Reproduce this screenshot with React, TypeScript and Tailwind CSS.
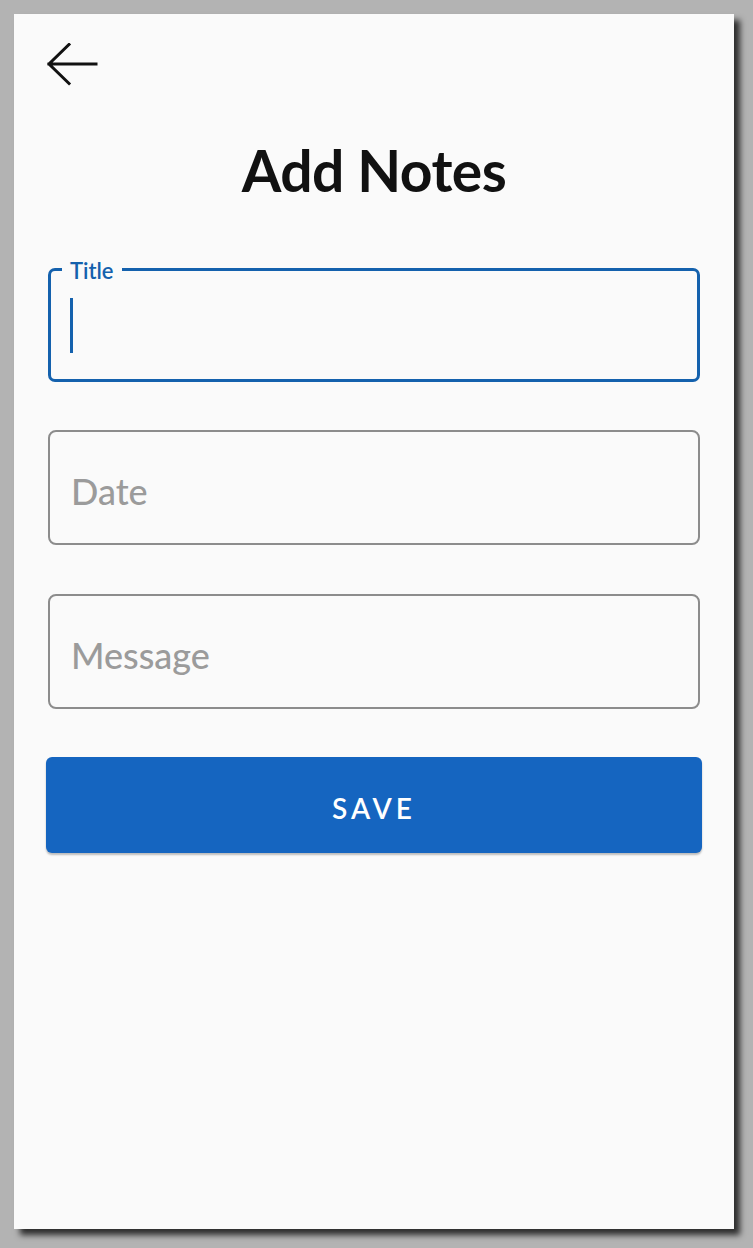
import React from "react";

function BackArrow() {
  return (
    <svg width="52" height="44" viewBox="0 0 52 44" fill="none">
      <path
        d="M50 21H3M23 1.5L3 21L23 40.5"
        stroke="#111"
        strokeWidth="3"
        strokeLinecap="square"
      />
    </svg>
  );
}

function TextBox({ placeholder }: { placeholder: string }) {
  return (
    <div className="flex h-[115px] items-center rounded-[8px] border-2 border-[#8c8c8c] px-[21px] pt-[6px]">
      <span className="text-[36px] leading-none font-medium text-[#9b9b9b]">
        {placeholder}
      </span>
    </div>
  );
}

export default function App() {
  return (
    <div className="h-[1248px] w-[753px] bg-[#b3b3b3] p-[14px] font-['Lato',sans-serif]">
      <div className="flex h-[1215px] w-[720px] flex-col bg-[#fafafa] px-[34px] shadow-[6px_6px_6px_rgba(0,0,0,0.75)]">
        <div className="mt-[29px] ml-[-2px]">
          <BackArrow />
        </div>

        <h1 className="mt-[55px] text-center text-[57px] leading-none font-bold tracking-[-0.5px] text-[#111]">
          Add Notes
        </h1>

        {/* focused field */}
        <div className="relative mt-[69px] flex h-[114px] items-center rounded-[7px] border-[3px] border-[#1461ad] px-[19px]">
          <span className="absolute -top-[11px] left-[11px] bg-[#fafafa] px-[8px] text-[22px] leading-none font-semibold text-[#1461ad]">
            Title
          </span>
          <div className="h-[55px] w-[3px] bg-[#1461ad]" />
        </div>

        <div className="mt-[48px]">
          <TextBox placeholder="Date" />
        </div>
        <div className="mt-[49px]">
          <TextBox placeholder="Message" />
        </div>

        <button className="-mx-[2px] mt-[48px] flex h-[96px] items-center justify-center rounded-[6px] bg-[#1565c0] pt-[5px] shadow-[0_2px_2px_rgba(0,0,0,0.25)]">
          <span className="text-[28px] leading-none font-semibold tracking-[4px] text-white">
            SAVE
          </span>
        </button>
      </div>
    </div>
  );
}
